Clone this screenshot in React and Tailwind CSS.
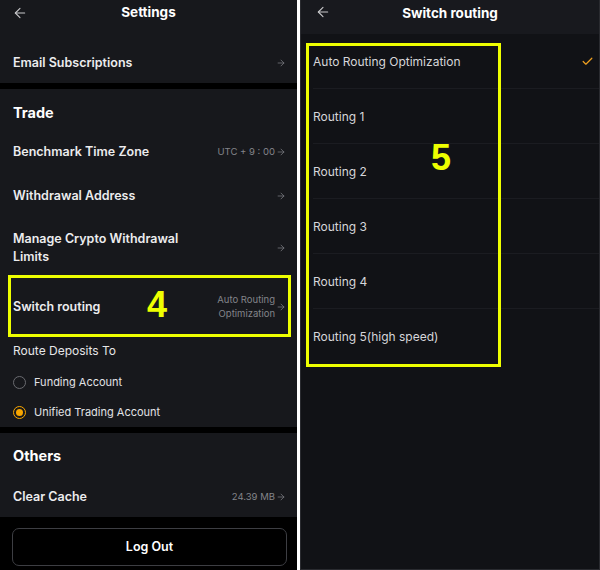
import React from 'react';
import { ArrowLeft, ArrowRight, Check } from 'lucide-react';

const font = { fontFamily: 'Inter, "Noto Sans", sans-serif' };

function Row({ label, value, className = 'h-[44px]' }) {
  return (
    <div className={`flex items-center justify-between pl-[13px] pr-[11px] ${className}`}>
      <div className="text-[12.5px] font-semibold leading-[18px] text-[#ececee] max-w-[170px]">{label}</div>
      <div className="flex items-center gap-[1px] text-[#83848a]">
        {value && <div className="text-[9.5px] leading-[14px] text-right">{value}</div>}
        <ArrowRight size={10} strokeWidth={1.7} />
      </div>
    </div>
  );
}

function Radio({ checked, label }) {
  return (
    <div className="flex items-center h-[30px] pl-[13px] gap-[8px]">
      <div
        className={`w-[13px] h-[13px] rounded-full border flex items-center justify-center ${
          checked ? 'border-[#f7a600] border-[1.5px]' : 'border-[#6a6b70]'
        }`}
      >
        {checked && <div className="w-[7px] h-[7px] rounded-full bg-[#f7a600]" />}
      </div>
      <div className="text-[11px] text-[#e2e2e5]">{label}</div>
    </div>
  );
}

function SettingsPanel() {
  return (
    <div className="relative w-[297px] h-[570px] bg-black flex flex-col" style={font}>
      <div className="bg-[#17181c] h-[83px] flex flex-col">
        <div className="relative h-[25px] flex items-center justify-center">
          <ArrowLeft size={16} strokeWidth={1.6} className="absolute left-[12px] text-[#c9c9cc]" />
          <div className="text-[13.5px] font-bold text-white">Settings</div>
        </div>
        <div className="h-[18px]" />
        <Row label="Email Subscriptions" className="h-[40px]" />
      </div>
      <div className="h-[6px]" />
      <div className="bg-[#17181c] h-[338px] flex flex-col">
        <div className="h-[41px] pt-[7px] flex items-center pl-[13px] text-[14.5px] font-bold text-white">Trade</div>
        <Row label="Benchmark Time Zone" value="UTC + 9 : 00" />
        <Row label="Withdrawal Address" />
        <Row label="Manage Crypto Withdrawal Limits" className="h-[60px]" />
        <Row
          label="Switch routing"
          value={
            <>
              Auto Routing
              <br />
              Optimization
            </>
          }
          className="h-[57px]"
        />
        <div className="h-[32px] flex items-center pl-[13px] text-[12px] text-[#e6e6e8]">Route Deposits To</div>
        <Radio label="Funding Account" />
        <Radio checked label="Unified Trading Account" />
      </div>
      <div className="h-[6px]" />
      <div className="bg-[#17181c] h-[84px] flex flex-col">
        <div className="h-[44px] pt-[2px] flex items-center pl-[13px] text-[14.5px] font-bold text-white">Others</div>
        <Row label="Clear Cache" value="24.39 MB" className="h-[40px]" />
      </div>
      <div className="flex-1 pt-[11px] pl-[12px]">
        <div className="w-[275px] h-[38px] rounded-[7px] border border-[#3d3e43] flex items-center justify-center text-[12.5px] font-semibold text-white">
          Log Out
        </div>
      </div>

      {/* annotation */}
      <div className="absolute left-[8px] top-[275px] w-[283px] h-[62px] border-[3px] border-[#eeff00]" />
      <div
        className="absolute left-[147px] top-[287px] text-[36px] leading-none font-bold text-[#eeff00]"
        style={{ fontFamily: '"Liberation Sans", Arial, sans-serif' }}
      >
        4
      </div>
    </div>
  );
}

const routes = [
  'Auto Routing Optimization',
  'Routing 1',
  'Routing 2',
  'Routing 3',
  'Routing 4',
  'Routing 5(high speed)',
];

function RoutingPanel() {
  return (
    <div
      className="relative w-[300px] h-[570px] bg-[#111216] border-l border-r border-b border-[#2a2b30] flex flex-col"
      style={font}
    >
      <div className="relative h-[34px] bg-[#18191e] flex items-center justify-center pb-[8px]">
        <ArrowLeft size={16} strokeWidth={1.6} className="absolute left-[14px] top-[4px] text-[#c9c9cc]" />
        <div className="text-[13.5px] font-bold text-white">Switch routing</div>
      </div>
      <div className="flex flex-col pl-[12px]">
        {routes.map((r, i) => (
          <div
            key={r}
            className={`h-[55px] flex items-center justify-between pr-[5px] pt-[1px] ${
              i < routes.length - 1 ? 'border-b border-[#1b1c21]' : ''
            }`}
          >
            <div className="text-[12px] text-[#d6d6da]">{r}</div>
            {i === 0 && <Check size={13} strokeWidth={2.2} color="#f0a020" />}
          </div>
        ))}
      </div>

      {/* annotation */}
      <div className="absolute left-[5px] top-[43px] w-[195px] h-[324px] border-[3px] border-[#eeff00]" />
      <div
        className="absolute left-[130px] top-[140px] text-[36px] leading-none font-bold text-[#eeff00]"
        style={{ fontFamily: '"Liberation Sans", Arial, sans-serif' }}
      >
        5
      </div>
    </div>
  );
}

export default function App() {
  return (
    <div className="w-[600px] h-[570px] bg-white flex gap-[3px] overflow-hidden">
      <SettingsPanel />
      <RoutingPanel />
    </div>
  );
}
